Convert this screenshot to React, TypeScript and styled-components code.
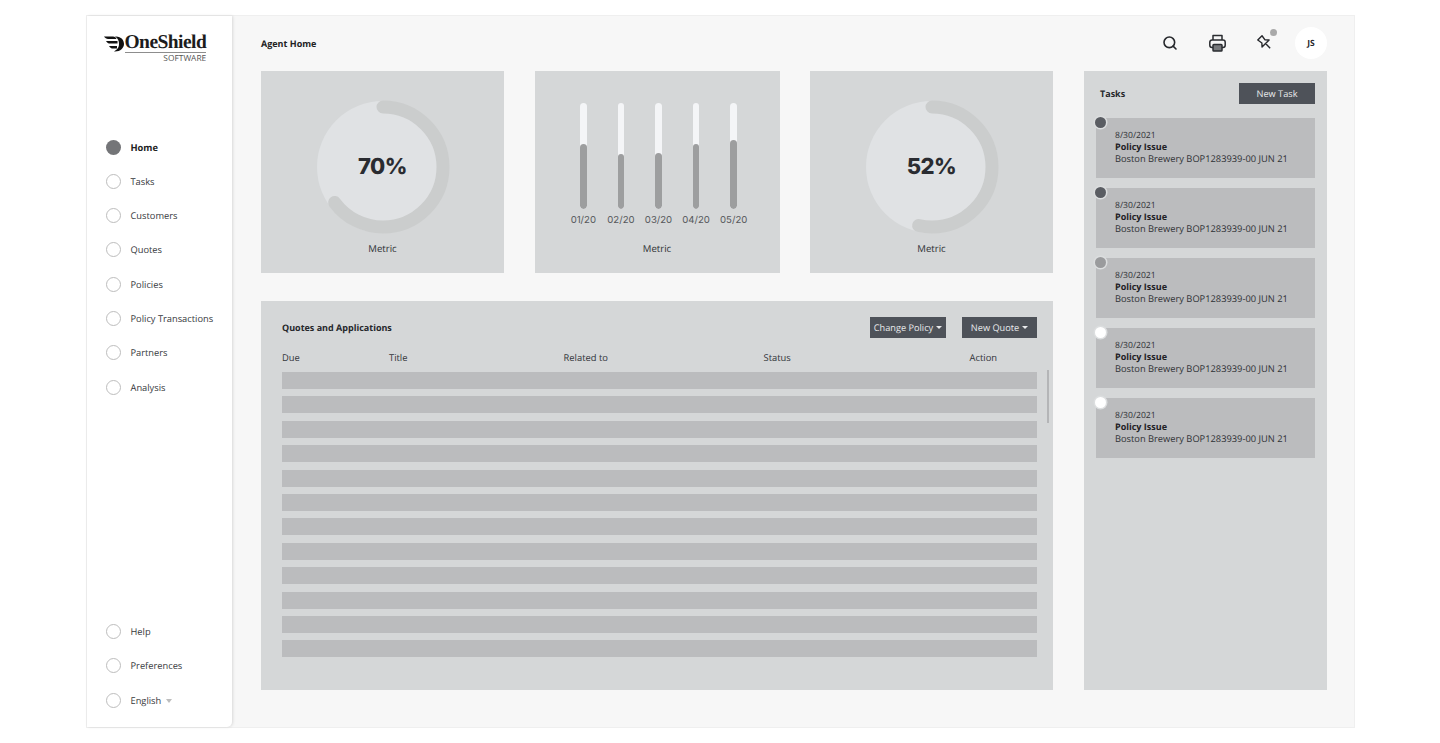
import React from "react";
import styled, { createGlobalStyle } from "styled-components";
import { Search } from "lucide-react";

const Global = createGlobalStyle`
  html, body { margin: 0; padding: 0; background: #fff; }
  body {
    font-family: "Open Sans", "Liberation Sans", sans-serif;
    color: #2b2d31;
    text-rendering: geometricPrecision;
  }
  * { box-sizing: border-box; }
`;

const Frame = styled.div`
  display: flex;
  width: 1269px;
  height: 713px;
  margin: 15px 0 15px 86px;
  background: #f7f7f7;
  border: 1px solid #efefef;
`;

const Sidebar = styled.aside`
  width: 145px;
  flex: none;
  display: flex;
  flex-direction: column;
  background: #fff;
  border-bottom-right-radius: 5px;
  box-shadow: 1px 0 3px rgba(0, 0, 0, 0.12);
  padding: 18px 0 18px 18.5px;
`;

const Logo = styled.div`
  display: flex;
  gap: 1px;
  width: 98px;
  height: 104px;
  margin-left: -2px;
`;

const WingSvg = styled.svg`
  flex: none;
  margin-top: 2px;
`;

const LogoText = styled.div`
  flex: 1;
  display: flex;
  flex-direction: column;
  align-items: flex-end;
`;

const LogoName = styled.div`
  width: 100%;
  height: 19px;
  border-bottom: 1.5px solid #8d8d8d;
  font-family: "Liberation Serif", serif;
  font-weight: 700;
  font-size: 19.5px;
  letter-spacing: -0.55px;
  line-height: 17px;
  color: #1c1c1c;
  white-space: nowrap;
`;

const LogoSub = styled.span`
  font-size: 8.4px;
  line-height: 12px;
  color: #555;
`;

const NavGroup = styled.nav`
  display: flex;
  flex-direction: column;
  gap: 16.3px;
`;

const BottomNav = styled(NavGroup)`
  margin-top: auto;
`;

const NavItem = styled.div`
  display: flex;
  align-items: center;
  gap: 10px;
  height: 18px;
  font-size: 9.3px;
  color: #36383c;
`;

const NavDot = styled.span<{ $active?: boolean }>`
  width: 15px;
  height: 15px;
  flex: none;
  border-radius: 50%;
  background: ${(p) => (p.$active ? "#747578" : "#fff")};
  border: ${(p) => (p.$active ? "none" : "1.5px solid #bdbdbd")};
`;

const NavLabel = styled.span<{ $active?: boolean }>`
  font-weight: ${(p) => (p.$active ? 700 : 400)};
  color: ${(p) => (p.$active ? "#222" : "#36383c")};
`;

const Caret = styled.span`
  display: inline-block;
  margin-left: 5px;
  vertical-align: 1px;
  border-left: 3.5px solid transparent;
  border-right: 3.5px solid transparent;
  border-top: 4px solid #bdbdbd;
`;

const Main = styled.main`
  flex: 1;
  display: flex;
  flex-direction: column;
  padding: 10px 28px 0 29px;
`;

const TopBar = styled.header`
  height: 45px;
  padding-bottom: 11px;
  display: flex;
  align-items: center;
`;

const PageTitle = styled.h1`
  margin: 0 auto 0 0;
  font-size: 9px;
  font-weight: 700;
  color: #222;
`;

const IconSlot = styled.span`
  position: relative;
  display: flex;
  align-items: center;
  justify-content: center;
  width: 20px;
  height: 20px;
  margin-right: 27.5px;
  color: #26282c;
`;

const Badge = styled.span`
  position: absolute;
  top: -4px;
  right: -2px;
  width: 7px;
  height: 7px;
  border-radius: 50%;
  background: #a9a9a9;
`;

const Avatar = styled.div`
  width: 32px;
  height: 32px;
  border-radius: 50%;
  background: #fff;
  display: flex;
  align-items: center;
  justify-content: center;
  font-size: 8.5px;
  font-weight: 700;
  color: #26282c;
  margin-left: -7px;
`;

const Content = styled.div`
  display: grid;
  grid-template-columns: 792px 243px;
  column-gap: 31px;
`;

const LeftColumn = styled.div`
  display: flex;
  flex-direction: column;
  gap: 28px;
`;

const Cards = styled.div`
  display: grid;
  grid-template-columns: 243px 245px 243px;
  justify-content: space-between;
`;

const Card = styled.section`
  position: relative;
  height: 202px;
  background: #d5d7d8;
  display: flex;
  flex-direction: column;
  align-items: center;
  padding-top: 29px;
`;

const RingWrap = styled.div`
  position: relative;
  width: 134px;
  height: 134px;
`;

const RingValue = styled.div`
  position: absolute;
  inset: 0;
  display: flex;
  align-items: center;
  justify-content: center;
  font-family: Inter, "Liberation Sans", sans-serif;
  font-size: 22px;
  font-weight: 800;
  letter-spacing: -0.5px;
  color: #2a2c31;
`;

const MetricLabel = styled.div`
  margin-top: auto;
  margin-bottom: 17px;
  font-size: 9.6px;
  line-height: 14px;
  color: #2f3135;
`;

const BarsChart = styled.div`
  display: flex;
  margin-left: 3px;
  margin-top: 3px;
`;

const BarColumn = styled.div`
  width: 37.6px;
  display: flex;
  flex-direction: column;
  align-items: center;
`;

const BarTrack = styled.div`
  position: relative;
  width: 6.5px;
  height: 106px;
  border-radius: 3.5px;
  background: #f4f5f7;
  overflow: hidden;
`;

const BarFill = styled.div`
  position: absolute;
  left: 0;
  right: 0;
  bottom: 0;
  border-radius: 3.5px;
  background: #9d9e9f;
`;

const BarLabel = styled.div`
  margin-top: 6px;
  font-family: Inter, "Liberation Sans", sans-serif;
  font-size: 9.6px;
  line-height: 12px;
  color: #55575b;
  white-space: nowrap;
`;

const TablePanel = styled.section`
  position: relative;
  height: 389px;
  background: #d5d7d8;
  padding: 15px 16px 0 21px;
`;

const TableHead = styled.div`
  display: flex;
  align-items: center;
  gap: 16px;
  height: 22px;
`;

const PanelTitle = styled.h2`
  margin: 0 auto 0 0;
  font-size: 9px;
  font-weight: 700;
  color: #26282c;
`;

const DarkButton = styled.button<{ $w: number }>`
  height: 21px;
  padding: 0;
  width: ${(p) => p.$w}px;
  border: none;
  background: #4e5259;
  color: #e9eaec;
  font-family: inherit;
  font-size: 9.2px;
  text-rendering: geometricPrecision;
  display: flex;
  align-items: center;
  justify-content: center;
`;

const ButtonCaret = styled.span`
  display: inline-block;
  margin-left: 3px;
  border-left: 3px solid transparent;
  border-right: 3px solid transparent;
  border-top: 3.5px solid #e9eaec;
`;

const Columns = styled.div`
  display: grid;
  grid-template-columns: 107px 174.5px 200px 206px 1fr;
  height: 14px;
  margin-top: 13px;
  font-size: 9.4px;
  line-height: 14px;
  color: #33353a;
`;

const Rows = styled.div`
  display: flex;
  flex-direction: column;
  gap: 7.4px;
  margin-top: 7px;
`;

const Row = styled.div`
  height: 17px;
  background: #bbbcbe;
`;

const ScrollThumb = styled.div`
  position: absolute;
  top: 69px;
  right: 4px;
  width: 2px;
  height: 53px;
  background: #b4b5b7;
`;

const TasksPanel = styled.aside`
  height: 619px;
  background: #d5d7d8;
  padding: 12px 12px 0 12px;
`;

const TasksHead = styled.div`
  display: flex;
  align-items: center;
  justify-content: space-between;
  height: 21px;
  padding-left: 4px;
`;

const TaskList = styled.div`
  display: flex;
  flex-direction: column;
  gap: 10px;
  margin-top: 14px;
`;

const TaskCard = styled.article`
  position: relative;
  height: 60px;
  background: #bbbcbe;
  padding: 11px 0 0 19px;
  font-size: 9.3px;
  line-height: 12px;
  color: #2f3135;
  white-space: nowrap;
`;

const TaskDot = styled.span<{ $color: string }>`
  position: absolute;
  top: -1px;
  left: -1px;
  width: 11px;
  height: 11px;
  border-radius: 50%;
  background: ${(p) => p.$color};
  box-shadow: 0 0 0 1.5px #dcdedf;
`;

const TaskDate = styled.div`
  font-size: 8.6px;
`;

const TaskTitle = styled.div`
  font-size: 9px;
  font-weight: 700;
  color: #1f2125;
`;

const Wing = () => (
  <WingSvg width="20" height="16" viewBox="0 0 20 16" aria-hidden="true">
    <g fill="#111">
      <path d="M0 0.5 H9 C11 0.5 12 1.5 12.5 3 H4 C2.5 3 1 2 0 0.5Z" />
      <path d="M2 5 H13.5 V7.5 H5 C4 7.5 3 6.5 2 5Z" />
      <path d="M5 10 H13 V12.5 H8 C7 12.5 6 11.5 5 10Z" />
      <path d="M11 0.5 C17 0 20 4 20 8 C20 12 16 16 10 15.5 C14 13 15 11 15 8 C15 5 14 2 11 0.5Z" />
    </g>
  </WingSvg>
);

const PrinterIcon = () => (
  <svg width="17" height="18" viewBox="0 0 17 18" fill="none" stroke="#2a2c30" strokeWidth="1.5" aria-hidden="true">
    <path d="M4 6V1.5h9V6" strokeLinejoin="round" />
    <path d="M4 13.5H3A2.2 2.2 0 0 1 .8 11.3V8.2A2.2 2.2 0 0 1 3 6h11a2.2 2.2 0 0 1 2.2 2.2v3.1a2.2 2.2 0 0 1-2.2 2.2h-1" />
    <rect x="4" y="10.5" width="9" height="6.5" rx="0.8" fill="#77797c" />
  </svg>
);

const PinIcon = () => (
  <svg width="16" height="16" viewBox="0 0 16 16" fill="none" stroke="#26282c" strokeWidth="1.4" strokeLinejoin="round" aria-hidden="true">
    <g transform="translate(7.5 7.5) rotate(-45)">
      <path d="M-3 -6.5 H3 L2.2 -1.5 L5 1.5 H-5 L-2.2 -1.5 Z M0 1.5 V8" />
    </g>
  </svg>
);

const Ring = ({ value, arc }: { value: number; arc: number }) => {
  const r = 60;
  const c = 2 * Math.PI * r;
  return (
    <RingWrap>
      <svg width="134" height="134" viewBox="0 0 134 134" aria-hidden="true">
        <circle cx="67" cy="67" r="66" fill="#e0e2e4" />
        <circle
          cx="67"
          cy="67"
          r={r}
          fill="none"
          stroke="#cbcdcd"
          strokeWidth="13"
          strokeLinecap="round"
          strokeDasharray={`${c * arc} ${c}`}
          transform="rotate(-90 67 67)"
        />
      </svg>
      <RingValue>{value}%</RingValue>
    </RingWrap>
  );
};

const navTop = ["Home", "Tasks", "Customers", "Quotes", "Policies", "Policy Transactions", "Partners", "Analysis"];
const bars = [
  { label: "01/20", fill: 61 },
  { label: "02/20", fill: 52 },
  { label: "03/20", fill: 53 },
  { label: "04/20", fill: 61 },
  { label: "05/20", fill: 65 },
];
const taskDots = ["#5a5d63", "#5a5d63", "#9a9b9d", "#ffffff", "#ffffff"];

export default function App() {
  return (
    <>
      <Global />
      <Frame>
        <Sidebar>
          <Logo>
            <Wing />
            <LogoText>
              <LogoName>OneShield</LogoName>
              <LogoSub>SOFTWARE</LogoSub>
            </LogoText>
          </Logo>
          <NavGroup>
            {navTop.map((n, i) => (
              <NavItem key={n}>
                <NavDot $active={i === 0} />
                <NavLabel $active={i === 0}>{n}</NavLabel>
              </NavItem>
            ))}
          </NavGroup>
          <BottomNav>
            <NavItem>
              <NavDot />
              <NavLabel>Help</NavLabel>
            </NavItem>
            <NavItem>
              <NavDot />
              <NavLabel>Preferences</NavLabel>
            </NavItem>
            <NavItem>
              <NavDot />
              <NavLabel>
                English
                <Caret />
              </NavLabel>
            </NavItem>
          </BottomNav>
        </Sidebar>
        <Main>
          <TopBar>
            <PageTitle>Agent Home</PageTitle>
            <IconSlot>
              <Search size={16} strokeWidth={2.4} />
            </IconSlot>
            <IconSlot>
              <PrinterIcon />
            </IconSlot>
            <IconSlot>
              <PinIcon />
              <Badge />
            </IconSlot>
            <Avatar>JS</Avatar>
          </TopBar>
          <Content>
            <LeftColumn>
              <Cards>
                <Card>
                  <Ring value={70} arc={0.648} />
                  <MetricLabel>Metric</MetricLabel>
                </Card>
                <Card>
                  <BarsChart>
                    {bars.map((b) => (
                      <BarColumn key={b.label}>
                        <BarTrack>
                          <BarFill style={{ height: `${b.fill}%` }} />
                        </BarTrack>
                        <BarLabel>{b.label}</BarLabel>
                      </BarColumn>
                    ))}
                  </BarsChart>
                  <MetricLabel>Metric</MetricLabel>
                </Card>
                <Card>
                  <Ring value={52} arc={0.535} />
                  <MetricLabel>Metric</MetricLabel>
                </Card>
              </Cards>
              <TablePanel>
                <TableHead>
                  <PanelTitle>Quotes and Applications</PanelTitle>
                  <DarkButton $w={76}>
                    Change Policy
                    <ButtonCaret />
                  </DarkButton>
                  <DarkButton $w={75}>
                    New Quote
                    <ButtonCaret />
                  </DarkButton>
                </TableHead>
                <Columns>
                  <span>Due</span>
                  <span>Title</span>
                  <span>Related to</span>
                  <span>Status</span>
                  <span>Action</span>
                </Columns>
                <Rows>
                  {Array.from({ length: 12 }, (_, i) => (
                    <Row key={i} />
                  ))}
                </Rows>
                <ScrollThumb />
              </TablePanel>
            </LeftColumn>
            <TasksPanel>
              <TasksHead>
                <PanelTitle>Tasks</PanelTitle>
                <DarkButton $w={76}>New Task</DarkButton>
              </TasksHead>
              <TaskList>
                {taskDots.map((c, i) => (
                  <TaskCard key={i}>
                    <TaskDot $color={c} />
                    <TaskDate>8/30/2021</TaskDate>
                    <TaskTitle>Policy Issue</TaskTitle>
                    <div>Boston Brewery BOP1283939-00 JUN 21</div>
                  </TaskCard>
                ))}
              </TaskList>
            </TasksPanel>
          </Content>
        </Main>
      </Frame>
    </>
  );
}
